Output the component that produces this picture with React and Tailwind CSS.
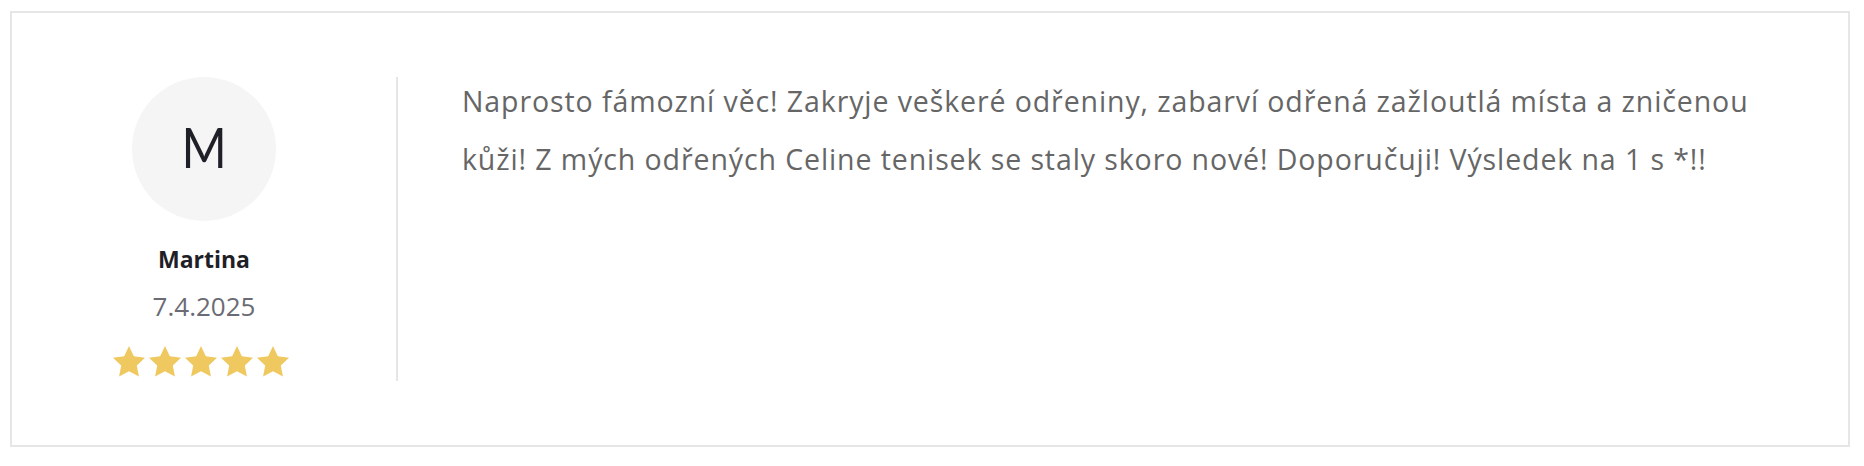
import React from "react";

function Star() {
  return (
    <svg width="34" height="33" viewBox="0 0 24 23" className="block">
      <path
        d="M12 0.6l3.4 7.2 7.9 1-5.8 5.5 1.5 7.8L12 18.3l-7 3.8 1.5-7.8L0.7 8.8l7.9-1z"
        fill="#efc85f"
      />
    </svg>
  );
}

export default function App() {
  return (
    <div className="bg-white w-[1864px] h-[466px] pl-[10px] pt-[11px]" style={{ fontFamily: "'Open Sans', Lato, sans-serif" }}>
      <div className="w-[1840px] h-[436px] border-2 border-[#e6e6e6] flex py-16">
        <div className="w-[384px] flex flex-col items-center">
          <div className="w-[144px] h-[144px] rounded-full bg-[#f5f5f5] flex items-center justify-center">
            <span className="text-[56px] leading-none text-[#1f1f27] -mt-[5px] scale-x-[0.87] font-['Lato']">M</span>
          </div>
          <div className="mt-[23px] text-[23px] leading-[30px] font-bold text-[#1f1f27]">Martina</div>
          <div className="mt-[15px] text-[26px] leading-[34px] text-[#6b6b75]">7.4.2025</div>
          <div className="mt-[22px] flex gap-[2px] -ml-[6px]">
            <Star />
            <Star />
            <Star />
            <Star />
            <Star />
          </div>
        </div>
        <div className="flex-1 border-l-2 border-[#e6e6e6] pl-16 pr-16">
          <p className="text-[28.5px] leading-[58px] tracking-[0.9px] text-[#666666] -mt-[5px]">
            Naprosto fámozní věc! Zakryje veškeré odřeniny, zabarví odřená zažloutlá místa a zničenou kůži! Z mých odřených Celine tenisek se staly skoro nové! Doporučuji! Výsledek na 1 s *!!
          </p>
        </div>
      </div>
    </div>
  );
}
